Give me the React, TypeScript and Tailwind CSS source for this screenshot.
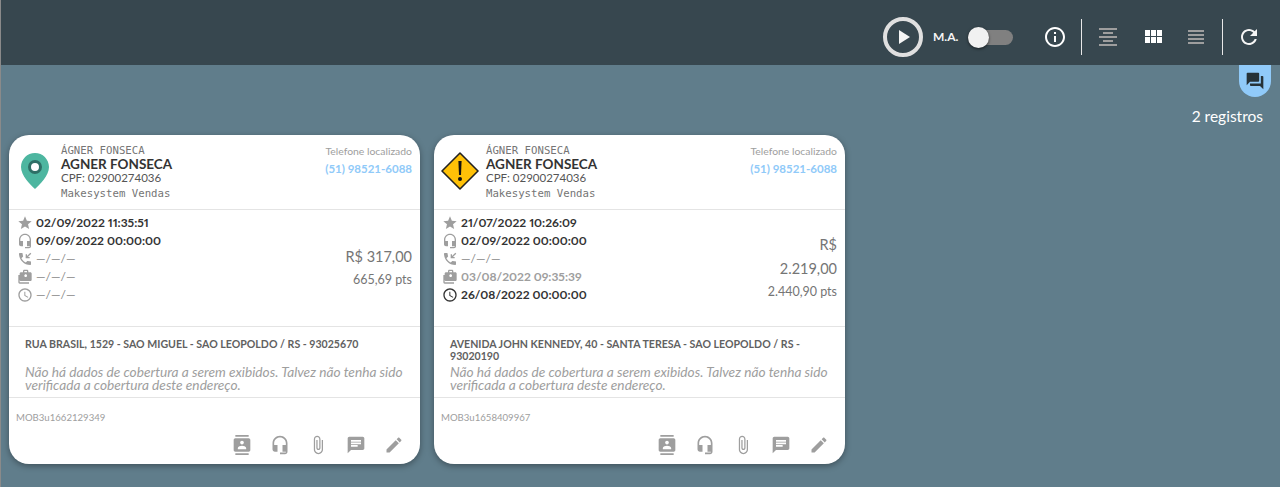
import type { ReactNode } from "react";

const sans = "font-['Lato','Noto_Sans',sans-serif]";
const mono = "font-['DejaVu_Sans_Mono',monospace]";

function Icon({ d, className }: { d: string; className?: string }) {
  return (
    <svg viewBox="0 0 24 24" fill="currentColor" className={className}>
      <path d={d} />
    </svg>
  );
}

const paths = {
  star: "M12 17.27L18.18 21l-1.64-7.03L22 9.24l-7.19-.61L12 2 9.19 8.63 2 9.24l5.46 4.73L5.82 21z",
  headset:
    "M12 1c-4.97 0-9 4.03-9 9v7c0 1.66 1.34 3 3 3h3v-8H5v-2c0-3.87 3.13-7 7-7s7 3.13 7 7v2h-4v8h4v1h-7v2h6c1.66 0 3-1.34 3-3V10c0-4.97-4.03-9-9-9z",
  phone:
    "M20 15.5c-1.25 0-2.45-.2-3.57-.57-.35-.11-.74-.03-1.02.24l-2.2 2.2c-2.83-1.44-5.15-3.75-6.59-6.59l2.2-2.21c.28-.26.36-.65.25-1C8.7 6.45 8.5 5.25 8.5 4c0-.55-.45-1-1-1H4c-.55 0-1 .45-1 1 0 9.39 7.61 17 17 17 .55 0 1-.45 1-1v-3.5c0-.55-.45-1-1-1zM19 9h-2.59l5.02-5.02L20 2.55l-5 5V5h-2v6h6z",
  work: "M4 9H2v11c0 1.1.9 2 2 2h14v-2H4V9zm16-4h-3V3c0-1.1-.9-2-2-2h-4C9.9 1 9 1.9 9 3v2H6c-1.1 0-2 .9-2 2v9c0 1.1.9 2 2 2h14c1.1 0 2-.9 2-2V7c0-1.1-.9-2-2-2zM11 3h4v2h-4V3zm2 5c1.1 0 2 .9 2 2s-.9 2-2 2-2-.9-2-2 .9-2 2-2z",
  clock:
    "M11.99 2C6.47 2 2 6.48 2 12s4.47 10 9.99 10C17.52 22 22 17.52 22 12S17.52 2 11.99 2zM12 20c-4.42 0-8-3.58-8-8s3.58-8 8-8 8 3.58 8 8-3.58 8-8 8zm.5-13H11v6l5.25 3.15.75-1.23-4.5-2.67z",
  contacts:
    "M20 0H4v2h16V0zM4 24h16v-2H4v2zM20 4H4c-1.1 0-2 .9-2 2v12c0 1.1.9 2 2 2h16c1.1 0 2-.9 2-2V6c0-1.1-.9-2-2-2zm-8 2.75c1.24 0 2.25 1.01 2.25 2.25s-1.01 2.25-2.25 2.25S9.75 10.24 9.75 9 10.76 6.75 12 6.75zM17 17H7v-1.5c0-1.67 3.33-2.5 5-2.5s5 .83 5 2.5V17z",
  attach:
    "M16.5 6v11.5c0 2.21-1.79 4-4 4s-4-1.79-4-4V5c0-1.38 1.12-2.5 2.5-2.5s2.5 1.12 2.5 2.5v10.5c0 .55-.45 1-1 1s-1-.45-1-1V6H10v9.5c0 1.38 1.12 2.5 2.5 2.5s2.5-1.12 2.5-2.5V5c0-2.21-1.79-4-4-4S7 2.79 7 5v12.5c0 3.04 2.46 5.5 5.5 5.5s5.5-2.46 5.5-5.5V6h-1.5z",
  chat: "M20 2H4c-1.1 0-1.99.9-1.99 2L2 22l4-4h14c1.1 0 2-.9 2-2V4c0-1.1-.9-2-2-2zM6 9h12v2H6V9zm8 5H6v-2h8v2zm4-6H6V6h12v2z",
  edit: "M3 17.25V21h3.75L17.81 9.94l-3.75-3.75L3 17.25zM20.71 7.04c.39-.39.39-1.02 0-1.41l-2.34-2.34c-.39-.39-1.02-.39-1.41 0l-1.83 1.83 3.75 3.75 1.83-1.83z",
  forum:
    "M21 6h-2v9H6v2c0 .55.45 1 1 1h11l4 4V7c0-.55-.45-1-1-1zm-4 6V3c0-.55-.45-1-1-1H3c-.55 0-1 .45-1 1v14l4-4h10c.55 0 1-.45 1-1z",
  refresh:
    "M17.65 6.35C16.2 4.9 14.21 4 12 4c-4.42 0-7.99 3.58-7.99 8s3.57 8 7.99 8c3.73 0 6.84-2.55 7.73-6h-2.08c-.82 2.33-3.04 4-5.65 4-3.31 0-6-2.69-6-6s2.69-6 6-6c1.66 0 3.14.69 4.22 1.78L13 11h7V4l-2.35 2.35z",
  info: "M11 7h2v2h-2zm0 4h2v6h-2zm1-9C6.48 2 2 6.48 2 12s4.48 10 10 10 10-4.48 10-10S17.52 2 12 2zm0 18c-4.41 0-8-3.59-8-8s3.59-8 8-8 8 3.59 8 8-3.59 8-8 8z",
  alignCenter: "M7 15v2h10v-2H7zm-4 6h18v-2H3v2zm0-8h18v-2H3v2zm4-6v2h10V7H7zM3 3v2h18V3H3z",
  module: "M4 11h5V5H4v6zm0 7h5v-6H4v6zm6 0h5v-6h-5v6zm6 0h5v-6h-5v6zm-6-7h5V5h-5v6zm6-6v6h5V5h-5z",
  headline: "M4 15h16v-2H4v2zm0 4h16v-2H4v2zm0-8h16V9H4v2zm0-6v2h16V5H4z",
  play: "M8 5v14l11-7z",
};

function Pin() {
  return (
    <svg viewBox="0 0 28 36" className="h-[36px] w-[28px]">
      <path d="M14 0C6.3 0 0 6.2 0 14c0 9 9.5 17.5 14 22 4.5-4.500 14-13 14-22C28 6.200 21.700 0 14 0z" fill="#4db6a0" />
      <circle cx="14" cy="14" r="5.500" fill="#fff" stroke="#2e6f66" strokeWidth="3" />
    </svg>
  );
}

function Warning() {
  return (
    <svg viewBox="0 0 38 38" className="h-[38px] w-[38px]">
      <path d="M19 1L37 19 19 37 1 19z" fill="#ffc107" stroke="#222" strokeWidth="1.600" strokeLinejoin="round" />
      <path d="M17.400 9h3.200l-.6 14h-2z" fill="#111" />
      <circle cx="19" cy="27" r="2" fill="#111" />
    </svg>
  );
}

type DateRow = { icon: string; text: string; tone: "dark" | "muted" | "empty"; iconDark?: boolean };

function DateLine({ row }: { row: DateRow }) {
  const textClass =
    row.tone === "dark"
      ? "font-bold text-[#333333]"
      : row.tone === "muted"
        ? "font-bold text-[#9e9e9e]"
        : "text-[#8a8a8a]";
  return (
    <div className="flex h-[18px] items-center gap-[3px]">
      <Icon d={row.icon} className={row.iconDark ? "h-[16px] w-[16px] text-[#333333]" : "h-[16px] w-[16px] text-[#9e9e9e]"} />
      <span className={`text-[12px] proportional-nums ${textClass}`}>{row.text}</span>
    </div>
  );
}

function Card({
  marker,
  dates,
  price,
  points,
  address,
  code,
}: {
  marker: ReactNode;
  dates: DateRow[];
  price: ReactNode;
  points: string;
  address: string;
  code: string;
}) {
  return (
    <div className={`flex h-[329px] w-[410.5px] flex-col rounded-[20px] bg-white shadow-[0_2px_6px_rgba(0,0,0,0.35)] ${sans}`}>
      <div className="flex h-[75px] border-b border-[#e4e4e4] pr-[7.500px]">
        <div className="flex w-[52px] shrink-0 items-center justify-center pb-[3px]">{marker}</div>
        <div className="flex flex-1 flex-col pt-[9px]">
          <div className={`text-[10.700px] leading-[14px] text-[#757575] ${mono}`}>ÁGNER FONSECA</div>
          <div className="-mt-[1px] text-[13.500px] font-bold leading-[14px] text-[#333333]">AGNER FONSECA</div>
          <div className="text-[11.500px] leading-[14px] text-[#555555]">CPF: 02900274036</div>
          <div className={`mt-[2px] text-[10.700px] leading-[14px] text-[#757575] ${mono}`}>Makesystem Vendas</div>
        </div>
        <div className="flex flex-col items-end pt-[10px]">
          <div className="text-[10.400px] leading-[12px] text-[#9e9e9e]">Telefone localizado</div>
          <div className="mt-[4px] text-[11.500px] font-bold leading-[16px] text-[#90caf9]">(51) 98521-6088</div>
        </div>
      </div>

      <div className="flex h-[117px] border-b border-[#e4e4e4] pl-[8px] pr-[7.500px] pt-[4px]">
        <div className="flex flex-1 flex-col">
          {dates.map((row, i) => (
            <DateLine key={i} row={row} />
          ))}
        </div>
        <div className="flex flex-col items-end justify-center pb-[8px] text-right">
          <div className="text-[14.500px] leading-[24px] text-[#757575]">{price}</div>
          <div className="mt-[3px] text-[12.500px] leading-[16px] text-[#757575]">{points}</div>
        </div>
      </div>

      <div className="h-[71px] border-b border-[#e4e4e4] pl-[16px] pr-[6px] pt-[11px]">
        <div className="h-[24px] pr-[10px] text-[10.600px] font-bold leading-[12px] text-[#616161]">{address}</div>
        <div className="mt-[3px] text-[13.700px] italic leading-[13px] text-[#9e9e9e]">
          Não há dados de cobertura a serem exibidos. Talvez não tenha sido verificada a cobertura deste endereço.
        </div>
      </div>

      <div className="flex flex-1 flex-col px-[7px] pt-[13px]">
        <div className="text-[9.600px] leading-[13px] text-[#9e9e9e]">{code}</div>
        <div className="mt-[11px] flex justify-end gap-[18px] pr-[9px] text-[#9e9e9e]">
          {[paths.contacts, paths.headset, paths.attach, paths.chat, paths.edit].map((d) => (
            <Icon key={d} d={d} className="h-[20px] w-[20px]" />
          ))}
        </div>
      </div>
    </div>
  );
}

export default function App() {
  return (
    <div className={`flex h-[487px] w-[1280px] flex-col overflow-hidden border-l border-[#8a8a8a] bg-[#607d8b] ${sans}`}>
      <header className="flex h-[65px] shrink-0 items-center justify-end bg-[#37474f] pr-[19px] pt-[9px]">
        <button className="flex h-[40px] w-[40px] items-center justify-center rounded-full border-[4px] border-[#e0e0e0] text-[#f5f5f5]">
          <Icon d={paths.play} className="h-[24px] w-[24px]" />
        </button>
        <span className="ml-[10px] w-[24px] whitespace-nowrap text-[12px] font-bold text-[#f5f5f5]">M.A.</span>
        <div className="relative ml-[11px] h-[15px] w-[45px] rounded-full bg-[#808080]">
          <div className="absolute left-0 top-[-3px] h-[21px] w-[21px] rounded-full bg-[#f1f1f1] shadow-[0_1px_3px_rgba(0,0,0,0.6)]" />
        </div>
        <Icon d={paths.info} className="ml-[30px] h-[24px] w-[24px] text-white" />
        <div className="ml-[14px] h-[36px] w-px bg-[#e8e8e8]" />
        <Icon d={paths.alignCenter} className="ml-[14px] h-[24px] w-[24px] text-[#9e9e9e]" />
        <Icon d={paths.module} className="ml-[21px] h-[24px] w-[24px] text-white" />
        <Icon d={paths.headline} className="ml-[19px] h-[24px] w-[24px] text-[#9e9e9e]" />
        <div className="ml-[14px] h-[36px] w-px bg-[#e8e8e8]" />
        <Icon d={paths.refresh} className="ml-[14px] h-[24px] w-[24px] text-[#f5f5f5]" />
      </header>

      <div className="relative flex-1">
        <div className="absolute right-[9px] top-0 flex h-[32px] w-[32px] items-center justify-center rounded-b-[16px] bg-[#90caf9] text-[#263238]">
          <Icon d={paths.forum} className="h-[20px] w-[20px]" />
        </div>
        <div className="flex justify-end pr-[17px] pt-[41px] text-[15.500px] leading-[20px] text-white">2 registros</div>
        <div className="mt-[9px] flex gap-[14.500px] pl-[8px]">
          <Card
            marker={<Pin />}
            dates={[
              { icon: paths.star, text: "02/09/2022 11:35:51", tone: "dark" },
              { icon: paths.headset, text: "09/09/2022 00:00:00", tone: "dark" },
              { icon: paths.phone, text: "—/—/—", tone: "empty" },
              { icon: paths.work, text: "—/—/—", tone: "empty" },
              { icon: paths.clock, text: "—/—/—", tone: "empty" },
            ]}
            price="R$ 317,00"
            points="665,69 pts"
            address="RUA BRASIL, 1529 - SAO MIGUEL - SAO LEOPOLDO / RS - 93025670"
            code="MOB3u1662129349"
          />
          <Card
            marker={<Warning />}
            dates={[
              { icon: paths.star, text: "21/07/2022 10:26:09", tone: "dark" },
              { icon: paths.headset, text: "02/09/2022 00:00:00", tone: "dark" },
              { icon: paths.phone, text: "—/—/—", tone: "empty" },
              { icon: paths.work, text: "03/08/2022 09:35:39", tone: "muted" },
              { icon: paths.clock, text: "26/08/2022 00:00:00", tone: "dark", iconDark: true },
            ]}
            price={
              <>
                <div>R$</div>
                <div>2.219,00</div>
              </>
            }
            points="2.440,90 pts"
            address="AVENIDA JOHN KENNEDY, 40 - SANTA TERESA - SAO LEOPOLDO / RS - 93020190"
            code="MOB3u1658409967"
          />
        </div>
      </div>
    </div>
  );
}
